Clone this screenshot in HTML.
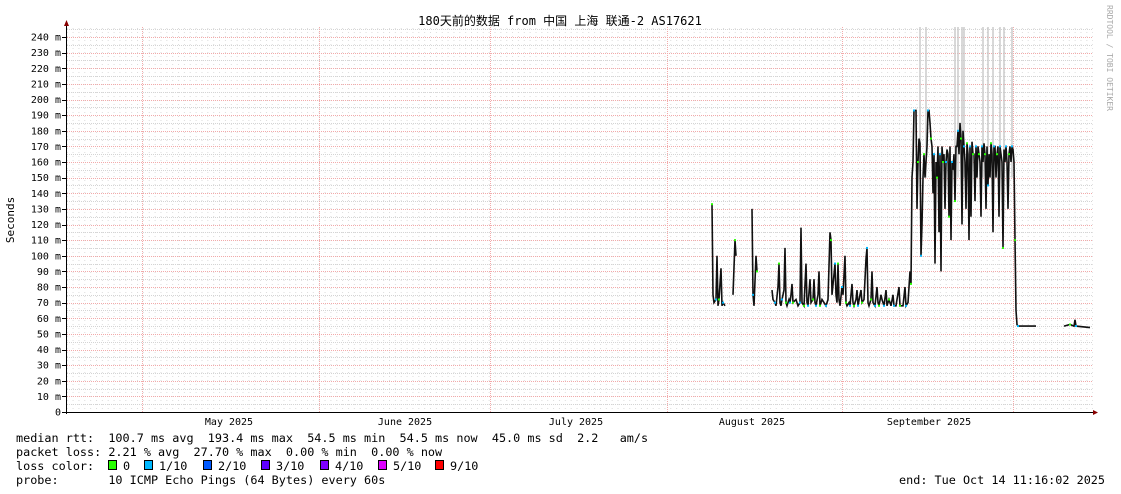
<!DOCTYPE html>
<html><head><meta charset="utf-8"><style>
body{margin:0;background:#fff;width:1121px;height:494px;overflow:hidden}
svg{display:block}
text{font-family:"DejaVu Sans Mono","Liberation Mono","Noto Sans CJK SC",monospace;font-size:10px;fill:#000}
.lg{font-size:11.8px;white-space:pre}
</style></head><body>
<svg id="s" width="1121" height="494" xmlns="http://www.w3.org/2000/svg">
<defs>
<pattern id="mv" x="66.7" y="0" width="5.86" height="4" patternUnits="userSpaceOnUse"><rect x="0" y="0" width="1" height="1" fill="#dcdcdc"/></pattern>
</defs>
<rect width="1121" height="494" fill="#fff"/>
<rect x="67" y="27" width="1026" height="385" fill="url(#mv)"/>
<g id="grid"></g>
<g id="smoke" stroke="#c8c8c8" stroke-width="1.4"></g>
<path id="data" fill="none" stroke="#111" stroke-width="1.6"/>
<g id="dots"></g>
<line x1="66" y1="412.5" x2="1095" y2="412.5" stroke="#000"/>
<line x1="66.5" y1="26" x2="66.5" y2="414" stroke="#000"/>
<polygon points="64,26 69,26 66.5,20" fill="#800"/>
<polygon points="1093,410 1093,415 1098,412.5" fill="#800"/>
<text x="560" y="25" text-anchor="middle" style="font-size:12px">180天前的数据 from 中国 上海 联通-2 AS17621</text>
<text transform="translate(1107,5) rotate(90)" style="font-size:8px;fill:#aaa">RRDTOOL / TOBI OETIKER</text>
<text transform="translate(14,220) rotate(-90)" text-anchor="middle" style="font-size:11px">Seconds</text>
<g id="yl"></g>
<text x="229" y="425" text-anchor="middle">May 2025</text>
<text x="405" y="425" text-anchor="middle">June 2025</text>
<text x="576" y="425" text-anchor="middle">July 2025</text>
<text x="752" y="425" text-anchor="middle">August 2025</text>
<text x="929" y="425" text-anchor="middle">September 2025</text>
<text class="lg" x="16" y="442">median rtt:  100.7 ms avg  193.4 ms max  54.5 ms min  54.5 ms now  45.0 ms sd  2.2   am/s</text>
<text class="lg" x="16" y="456">packet loss: 2.21 % avg  27.70 % max  0.00 % min  0.00 % now</text>
<text class="lg" x="16" y="470">loss color:  </text>
<text class="lg" x="16" y="484">probe:       10 ICMP Echo Pings (64 Bytes) every 60s</text>
<text class="lg" x="1105" y="484" text-anchor="end">end: Tue Oct 14 11:16:02 2025</text>
<g id="lc"></g>
</svg>
<script>
var NS="http://www.w3.org/2000/svg";
function el(t,a,p){var e=document.createElementNS(NS,t);for(var k in a)e.setAttribute(k,a[k]);document.getElementById(p).appendChild(e);return e;}
function Y(v){return 412-v*1.5625;}
for(var v=5;v<=245;v+=5){var y=Math.round(Y(v))+0.5;el('line',{x1:67,x2:1093,y1:y,y2:y,stroke:(v%10==0?'#f2aaaa':'#d4d4d4'),'stroke-dasharray':'1,1'},'grid');}
[142.5,319.5,490.5,667.5,842.5,1013.5].forEach(function(x){el('line',{x1:x,x2:x,y1:27,y2:412,stroke:'#f2aaaa','stroke-dasharray':'1,1'},'grid');});
for(var v=0;v<=240;v+=10){var t=el('text',{x:61,y:Y(v)+3.5,'text-anchor':'end'},'yl');t.textContent=v==0?'0':v+' m';el('line',{x1:62,x2:66,y1:Math.round(Y(v))+.5,y2:Math.round(Y(v))+.5,stroke:'#000'},'yl');}
[920,926,955,958,962,964,983,988,993,1000,1004,1012].forEach(function(x){el('line',{x1:x,x2:x,y1:27,y2:Y(150),stroke:'#c8c8c8'},'smoke');});
var d=[712,133,713,75,714,70,716,72,717,100,718,68,719,72,721,92,722,68,723,70,725,68,null,733,75,735,110,736,100,null,752,130,753,75,754,68,756,100,757,90,null,
772,78,773,72,775,70,776,68,778,80,779,95,780,70,781,68,782,72,784,78,785,105,786,70,787,68,789,72,790,70,791,75,792,82,793,70,796,72,798,68,800,70,801,118,802,70,804,68,806,95,807,70,808,68,810,85,811,70,813,72,814,85,815,70,816,68,818,75,819,90,820,68,822,72,824,70,826,68,828,72,830,115,831,110,832,75,834,88,835,95,836,75,837,70,838,95,839,72,840,68,842,80,843,75,845,100,846,70,847,68,849,70,850,68,852,82,853,70,854,68,856,72,857,78,858,68,860,75,861,78,862,70,864,72,866,98,867,105,868,70,869,68,871,72,872,90,873,70,875,68,877,80,878,70,879,68,881,75,882,72,884,68,886,78,887,68,889,72,891,68,893,75,894,68,896,68,899,80,900,68,903,68,905,80,906,68,908,70,910,90,911,82,912,150,913,160,914,193,916,193,917,130,918,160,919,175,920,172,921,100,922,120,923,150,924,165,925,150,927,170,928,193,929,193,930,185,931,175,932,170,933,140,934,165,935,95,936,160,937,150,938,170,939,115,940,165,941,90,942,170,943,160,944,165,945,130,946,160,947,168,948,165,949,125,950,170,951,110,952,160,953,155,954,165,955,135,956,170,957,170,958,180,959,165,960,185,961,175,962,120,963,180,964,170,965,160,966,130,967,172,968,165,969,110,970,170,971,125,972,173,973,165,974,165,975,135,976,170,977,150,978,170,979,165,980,160,981,125,982,170,983,160,984,172,985,165,986,130,987,170,988,145,989,165,990,150,991,172,992,165,993,115,994,170,995,170,996,150,997,165,998,170,999,125,1000,170,1001,165,1002,160,1003,105,1004,168,1005,160,1006,170,1007,160,1008,130,1009,165,1010,170,1011,160,1012,170,1013,168,1014,160,1015,110,1016,65,1017,56,1018,55,1036,55,null,1064,55,1070,56,1074,55,1075,59,1076,55,1090,54];
var s="",m=true,i=0,pts=[];
while(i<d.length){if(d[i]===null){m=true;i++;continue;}var x=d[i],y=Y(d[i+1]);s+=(m?"M":"L")+x+","+y.toFixed(1);pts.push([x,y]);m=false;i+=2;}
document.getElementById('data').setAttribute('d',s);
pts.forEach(function(p,k){if(k%3==0)el('rect',{x:p[0]-1,y:p[1]-1,width:2,height:2,fill:(k%2?'#00b8ff':'#26ff00')},'dots');});
var lc=[['#26ff00','0'],['#00b8ff','1/10'],['#0059ff','2/10'],['#5e00ff','3/10'],['#7e00ff','4/10'],['#dd00ff','5/10'],['#ff0000','9/10']];
var xs=[108,144,203,261,320,378,435];
lc.forEach(function(c,k){el('rect',{x:xs[k]+.5,y:460.5,width:8,height:9,fill:c[0],stroke:'#000'},'lc');var t=el('text',{x:xs[k]+15,y:470,'class':'lg'},'lc');t.textContent=c[1];});
</script>
</body></html>
